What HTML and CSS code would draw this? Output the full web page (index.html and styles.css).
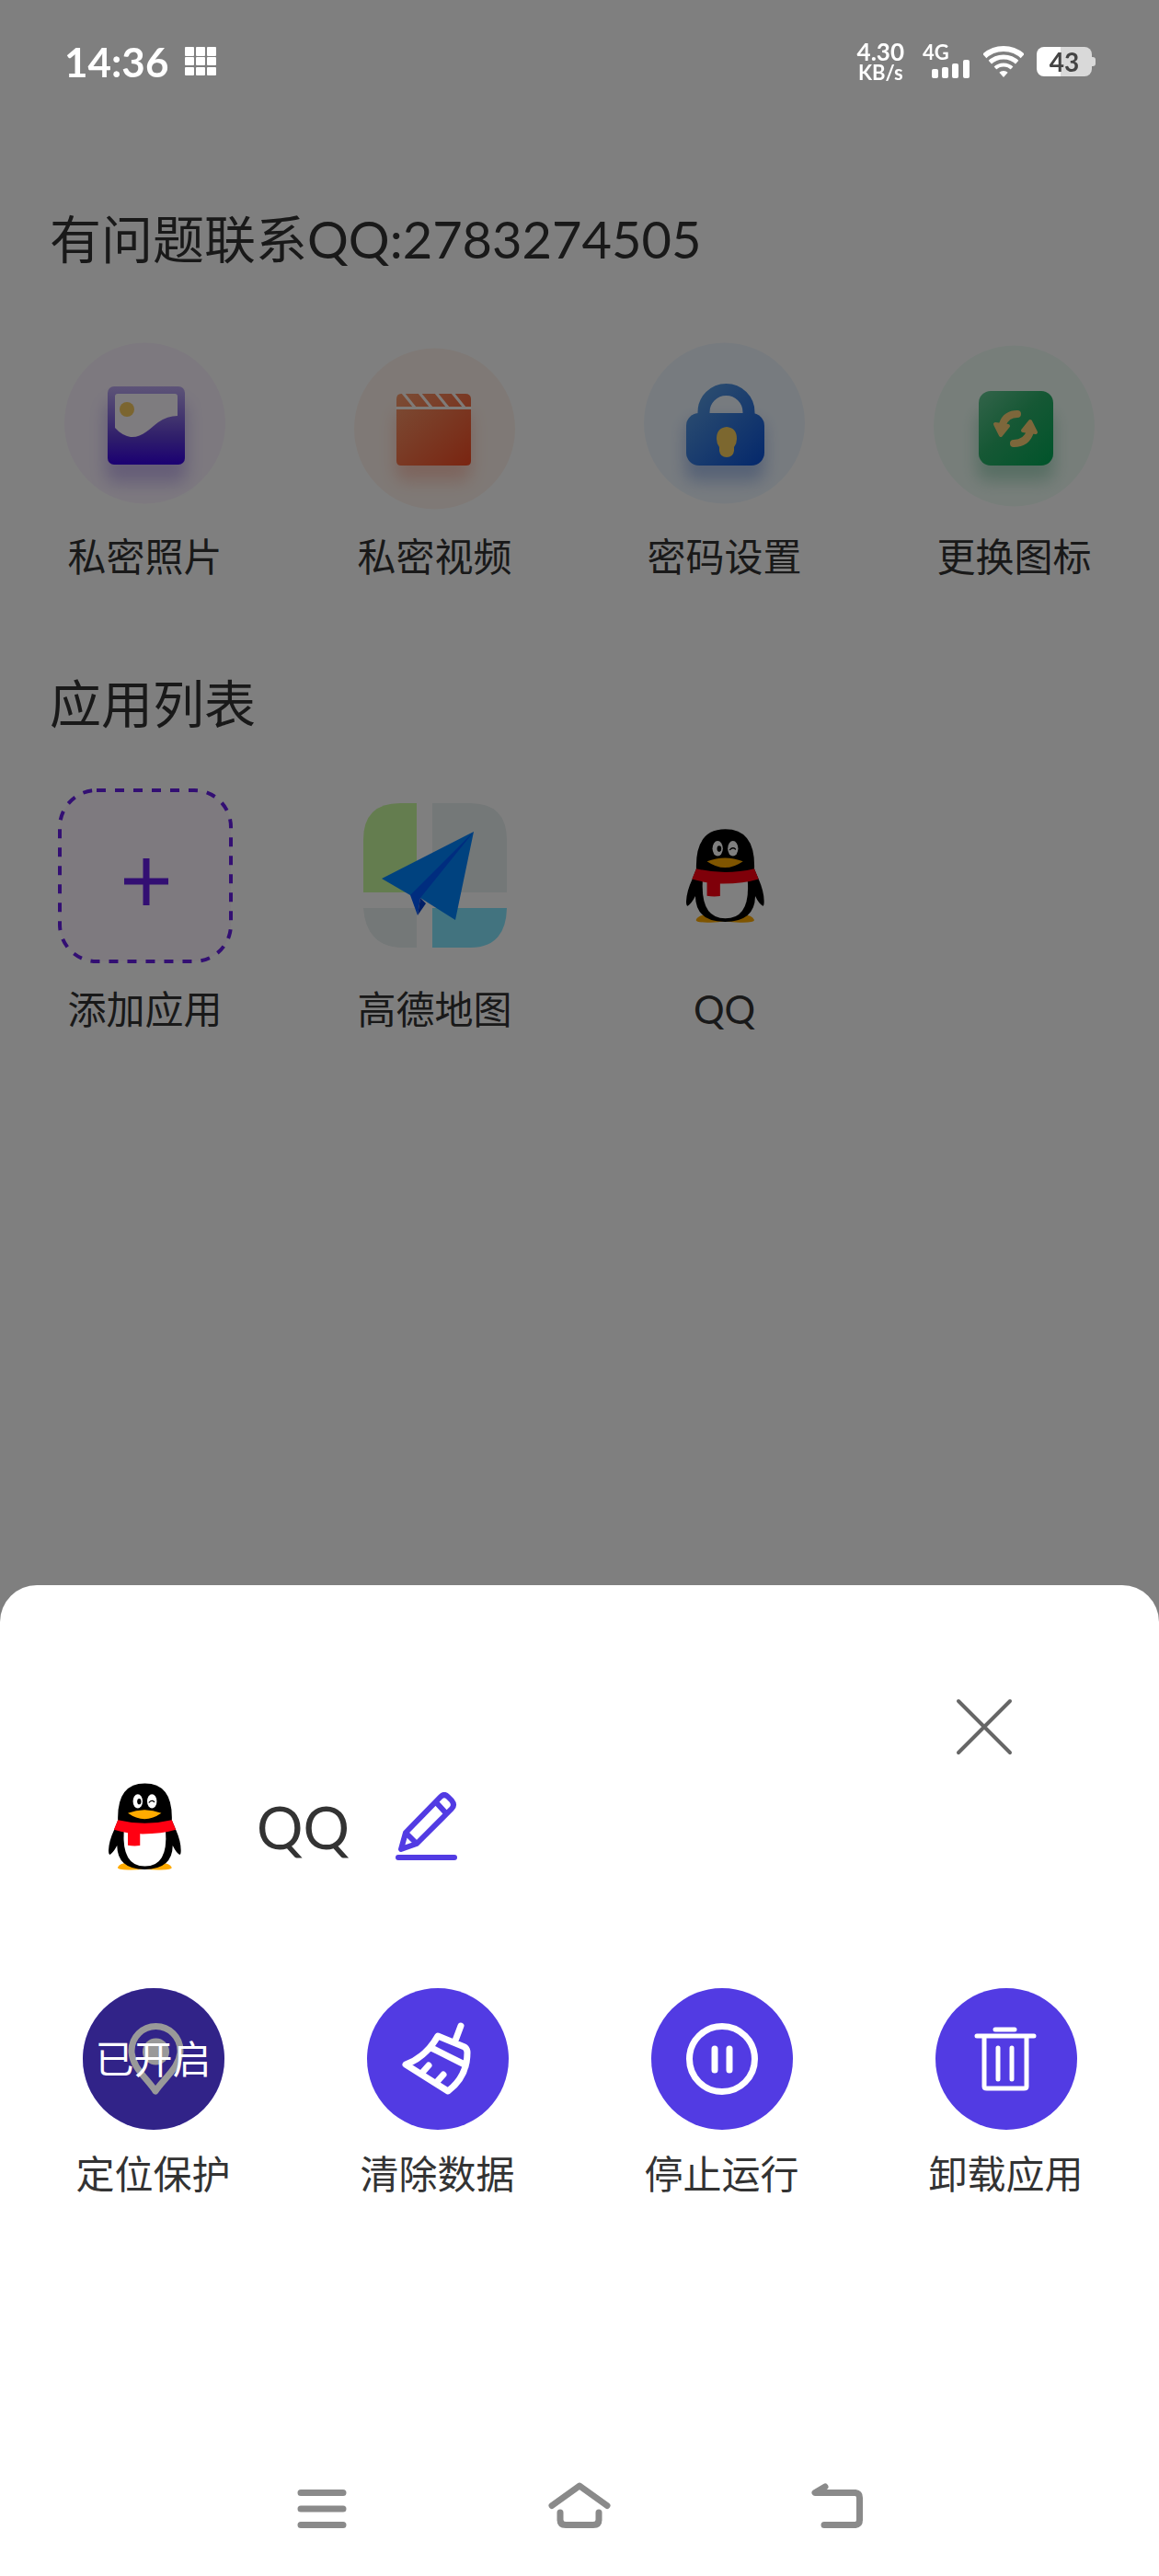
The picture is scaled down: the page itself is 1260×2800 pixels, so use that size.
FILE: index.html
```html
<!DOCTYPE html>
<html lang="zh-CN">
<head>
    <meta charset="UTF-8">
    <meta name="viewport" content="width=device-width, initial-scale=1.0">
    <title>应用列表</title>
    <link rel="stylesheet" href="styles.css">
</head>
<body>
    <!-- shared logo -->
    <svg class="defs" width="0" height="0" aria-hidden="true">
        <symbol id="penguin" viewBox="345 245 256 307">
            <path fill="#ffab00" d="M377 543 Q384 527 412 526 L532 526 Q560 527 568 543 Q568 551 530 551 Q500 552 472 547 Q446 552 414 551 Q377 551 377 543Z"/>
            <path fill="#000" d="M378 376 Q374 246 473 246 Q572 246 568 376 L582 409 Q600 450 600 482 Q600 497 596 497 Q584 492 571 465 Q570 549 472 549 Q376 549 375 465 Q362 490 350 497 Q345 497 345 482 Q346 450 365 409Z"/>
            <path fill="#fff" d="M399 412 L546 412 Q556 538 473 538 Q391 538 399 412Z"/>
            <path fill="#ff0012" d="M378 375 Q472 398 568 375 L582 409 Q530 425 456 424 L456 465 Q434 468 413 464 L413 420 Q388 416 364 409Z"/>
            <path fill="#ffab00" d="M413 351 Q472 328 531 351 Q472 392 413 351Z"/>
            <ellipse cx="448" cy="309" rx="17" ry="25" fill="#fff"/>
            <ellipse cx="498" cy="309" rx="17" ry="25" fill="#fff"/>
            <ellipse cx="453" cy="310" rx="7" ry="10" fill="#000"/>
            <path fill="none" stroke="#000" stroke-width="4" stroke-linecap="round" d="M488 313 Q497 303 506 311"/>
        </symbol>
    </svg>

    <header class="status-bar">
        <div class="status-left">
            <span class="time">14:36</span>
            <svg width="34" height="32" viewBox="0 0 34 32" fill="#fff">
                <rect x="0" y="0" width="10" height="10" rx="1"/><rect x="12" y="0" width="10" height="10" rx="1"/><rect x="24" y="0" width="10" height="10" rx="1"/>
                <rect x="0" y="11" width="10" height="9" rx="1"/><rect x="12" y="11" width="10" height="9" rx="1"/><rect x="24" y="11" width="10" height="9" rx="1"/>
                <rect x="0" y="22" width="10" height="9" rx="1"/><rect x="12" y="22" width="10" height="9" rx="1"/><rect x="24" y="22" width="10" height="9" rx="1"/>
            </svg>
        </div>
        <div class="status-right">
            <div class="speed"><span>4.30</span><small>KB/s</small></div>
            <div class="signal">
                <span>4G</span>
                <svg width="42" height="20" viewBox="0 0 42 20" fill="#fff">
                    <rect x="0" y="10" width="7" height="10" rx="2"/>
                    <rect x="11" y="8" width="7" height="12" rx="2"/>
                    <rect x="22" y="4" width="7" height="16" rx="2"/>
                    <rect x="34" y="0" width="7" height="20" rx="2"/>
                </svg>
            </div>
            <svg class="wifi" width="44" height="34" viewBox="0 0 44 34">
                <clipPath id="fan"><path d="M22 34 L-4 5 L-4 -5 H48 V5Z"/></clipPath>
                <g clip-path="url(#fan)" fill="none" stroke="#fff">
                    <circle cx="22" cy="34" r="31" stroke-width="6"/>
                    <circle cx="22" cy="34" r="22" stroke-width="5"/>
                    <circle cx="22" cy="34" r="13.5" stroke-width="4"/>
                    <circle cx="22" cy="34" r="3.5" stroke-width="7"/>
                </g>
            </svg>
            <div class="battery"><span>43</span></div>
        </div>
    </header>

    <main class="page">
        <h2>有问题联系QQ:2783274505</h2>
        <div class="grid features">
            <button type="button" class="item">
                <svg width="175" height="184" viewBox="0 0 175 184">
                    <defs>
                        <linearGradient id="gPhoto" x1="0" y1="0" x2="0" y2="1">
                            <stop offset="0" stop-color="#bba8f0"/>
                            <stop offset=".35" stop-color="#8c72e0"/>
                            <stop offset=".65" stop-color="#5f3dd6"/>
                            <stop offset="1" stop-color="#3600e6"/>
                        </linearGradient>
                        <filter id="soft" x="-40%" y="-40%" width="180%" height="180%"><feGaussianBlur stdDeviation="9"/></filter>
                    </defs>
                    <circle cx="87.500" cy="89" r="87.500" fill="#faf2ff"/>
                    <rect x="45" y="66" width="88" height="88" rx="12" fill="#6a4ad0" opacity=".32" filter="url(#soft)"/>
                    <rect x="47" y="49" width="84" height="85" rx="7" fill="url(#gPhoto)"/>
                    <path fill="#fdf9ff" d="M58 57 H120 Q123 57 123 60 V81 Q112 81 102 88 C93 95 84 105 72 104 Q62 102 55 94 V60 Q55 57 58 57Z"/>
                    <circle cx="68" cy="74" r="8" fill="#f7cb60"/>
                </svg>
                <span>私密照片</span>
            </button>
            <button type="button" class="item">
                <svg width="175" height="184" viewBox="0 0 175 184">
                    <defs>
                        <linearGradient id="gVideo" x1="0" y1="0" x2="1" y2="1">
                            <stop offset="0" stop-color="#f69a6c"/>
                            <stop offset="1" stop-color="#f44a22"/>
                        </linearGradient>
                    </defs>
                    <circle cx="87.500" cy="95" r="87.500" fill="#fff3ec"/>
                    <rect x="45" y="76" width="82" height="76" rx="12" fill="#f0603c" opacity=".28" filter="url(#soft)"/>
                    <path fill="url(#gVideo)" d="M51 57 H121 Q127 57 127 63 V130 Q127 135 122 135 H51 Q46 135 46 130 V63 Q46 57 51 57Z"/>
                    <path fill="none" stroke="#fff6f0" stroke-width="3" d="M45 72.500 H128 M53 56 L66 72 M71 56 L84 72 M89 56 L102 72 M107 56 L120 72"/>
                </svg>
                <span>私密视频</span>
            </button>
            <button type="button" class="item">
                <svg width="175" height="184" viewBox="0 0 175 184">
                    <defs>
                        <linearGradient id="gLock" gradientUnits="userSpaceOnUse" x1="50" y1="56" x2="128" y2="134">
                            <stop offset="0" stop-color="#5c9ee0"/>
                            <stop offset="1" stop-color="#0a52d8"/>
                        </linearGradient>
                    </defs>
                    <circle cx="87.500" cy="89" r="87.500" fill="#eff7ff"/>
                    <rect x="45" y="86" width="86" height="66" rx="12" fill="#2f62c8" opacity=".34" filter="url(#soft)"/>
                    <path fill="none" stroke="url(#gLock)" stroke-width="13" d="M65 86 V77 A24.500 24.500 0 0 1 114 77 V86"/>
                    <rect x="46" y="78" width="85" height="57" rx="14" fill="url(#gLock)"/>
                    <path fill="#f8cf5e" d="M90 93 Q101 94 101 106 Q101 111 98 115 V119 Q97 126 90 126 Q83 126 82 119 V115 Q79 111 79 106 Q79 94 90 93Z"/>
                </svg>
                <span>密码设置</span>
            </button>
            <button type="button" class="item">
                <svg width="175" height="184" viewBox="0 0 175 184">
                    <defs>
                        <linearGradient id="gSwap" x1="0" y1="0" x2="1" y2="1">
                            <stop offset="0" stop-color="#66c894"/>
                            <stop offset=".45" stop-color="#2cb06a"/>
                            <stop offset="1" stop-color="#00a855"/>
                        </linearGradient>
                    </defs>
                    <circle cx="87.500" cy="92" r="87.500" fill="#effdf5"/>
                    <rect x="47" y="76" width="84" height="76" rx="12" fill="#2a9a68" opacity=".32" filter="url(#soft)"/>
                    <rect x="49" y="54" width="81" height="81" rx="13" fill="url(#gSwap)"/>
                    <g fill="#fbcf77" stroke="#fbcf77" stroke-linejoin="round" stroke-linecap="round">
                        <path fill="none" stroke-width="8" d="M91 79 Q79 79 75 90 M87 111 Q101 111 105 98"/>
                        <path stroke-width="4" d="M67 90 L81 92 L73 102Z M97 97 L105 87 L111 99Z"/>
                    </g>
                </svg>
                <span>更换图标</span>
            </button>
        </div>

        <h2>应用列表</h2>
        <div class="grid apps">
            <button type="button" class="item">
                <svg width="190" height="190" viewBox="0 0 190 190">
                    <rect x="2" y="2" width="186" height="186" rx="40" fill="#fcf5ff" stroke="#661ee6" stroke-width="4" stroke-dasharray="10 10"/>
                    <path stroke="#661ee6" stroke-width="7" d="M72 101 H120 M96 76 V127"/>
                </svg>
                <span>添加应用</span>
            </button>
            <button type="button" class="item">
                <svg width="190" height="190" viewBox="-17 -16 190 190">
                    <path fill="#c8fa9f" d="M0 97 V40 Q0 0 40 0 H58 V97Z"/>
                    <path fill="#e8f0f0" d="M75 0 H116 Q156 0 156 40 V97 H75Z M0 114 H58 V157 H40 Q3 155 0 114Z"/>
                    <path fill="#84e6fe" d="M75 114 H156 Q155 157 116 157 H75Z"/>
                    <path fill="#0084ff" d="M120 31 L20 82 L51 100 L62 103 L100 127Z"/>
                    <path fill="#005aff" d="M120 31 L51 100 L59 122 L62 103Z"/>
                    <path fill="#003ccc" d="M62 103 L68 109 L59 122Z"/>
                </svg>
                <span>高德地图</span>
            </button>
            <button type="button" class="item">
                <svg width="190" height="190" viewBox="0 0 190 190"><use href="#penguin" x="53" y="44" width="85" height="102"/></svg>
                <span>QQ</span>
            </button>
        </div>
    </main>

    <div class="mask"></div>

    <section class="sheet">
        <button type="button" class="close" aria-label="关闭">
            <svg width="62" height="62" viewBox="0 0 62 62" stroke="#666" stroke-width="4" stroke-linecap="round"><path d="M3 3 L59 59 M59 3 L3 59"/></svg>
        </button>
        <div class="app-info">
            <svg width="79" height="95"><use href="#penguin" width="79" height="95"/></svg>
            <span class="app-name">QQ</span>
            <button type="button" aria-label="编辑">
                <svg width="68" height="76" viewBox="0 0 68 76" fill="none" stroke="#523be3" stroke-width="6" stroke-linecap="round" stroke-linejoin="round">
                    <path d="M3 71 H64"/>
                    <path d="M6 62 L11 44 L49 5 Q53 1 57 5 L61 9 Q65 14 61 18 L23 56Z M44 11 L55 23 M12 45 L22 55"/>
                </svg>
            </button>
        </div>
        <div class="grid actions">
            <button type="button" class="item">
                <span class="round">
                    <svg width="154" height="154" viewBox="0 0 154 154">
                        <path fill="none" stroke="#fff" stroke-width="7" stroke-linejoin="round" d="M79 112 C70 98 53 86 53 68 A26.500 26.500 0 0 1 106 68 C106 86 88 98 79 112Z"/>
                        <circle cx="79.500" cy="69" r="14.500" fill="#fff"/>
                    </svg>
                    <em class="on">已开启</em>
                </span>
                <span>定位保护</span>
            </button>
            <button type="button" class="item">
                <span class="round">
                    <svg width="154" height="154" viewBox="0 0 154 154" fill="none" stroke="#fff" stroke-width="7" stroke-linecap="round" stroke-linejoin="round">
                        <path d="M102 41 L96 57 M77 52 L106 64 Q109 66 109 70 Q109 96 88 112 L42 83 Q64 75 77 52Z M70 65 L106 83 M67 84 L59 93 M83 94 L75 103"/>
                    </svg>
                </span>
                <span>清除数据</span>
            </button>
            <button type="button" class="item">
                <span class="round">
                    <svg width="154" height="154" viewBox="0 0 154 154" fill="none" stroke="#fff" stroke-width="7" stroke-linecap="round">
                        <circle cx="77" cy="77" r="35.500"/>
                        <path d="M69 66 V89 M85 66 V89"/>
                    </svg>
                </span>
                <span>停止运行</span>
            </button>
            <button type="button" class="item">
                <span class="round">
                    <svg width="154" height="154" viewBox="0 0 154 154" fill="none" stroke="#fff" stroke-width="5" stroke-linecap="round">
                        <path d="M45 52 H107 M65 45 H86 M53 54 V107 Q53 109 56 109 H96 Q99 109 99 107 V54 M68 65 V99 M83 65 V99"/>
                    </svg>
                </span>
                <span>卸载应用</span>
            </button>
        </div>
        <nav class="nav-bar">
            <button type="button" aria-label="菜单">
                <svg width="68" height="50" viewBox="0 0 68 50" stroke="#8a8a8a" stroke-width="7" stroke-linecap="round"><path d="M11 11.500 H57 M11 29 H57 M11 46.500 H57"/></svg>
            </button>
            <button type="button" aria-label="主页">
                <svg width="68" height="50" viewBox="0 0 68 50" fill="none" stroke="#8a8a8a" stroke-width="7" stroke-linecap="round" stroke-linejoin="round"><path d="M4 25.500 L34 4 L64 25.500 M13 33 V41 Q13 46.500 19 46.500 H49 Q55 46.500 55 41 V33"/></svg>
            </button>
            <button type="button" aria-label="返回">
                <svg width="68" height="50" viewBox="0 0 68 50" fill="none" stroke="#8a8a8a" stroke-width="7" stroke-linecap="round" stroke-linejoin="round"><path d="M21 5 L10 11.500 H54 Q58.500 12 58.500 17 V41 Q58.500 46 54 46.500 H20"/></svg>
            </button>
        </nav>
    </section>
</body>
</html>
```

FILE: styles.css
```css
* {
    box-sizing: border-box;
}
body {
    margin: 0;
    min-height: 100vh;
    background: #fff;
    color: #333;
    font-family: Lato, "Noto Sans CJK SC", sans-serif;
}
svg {
    display: block;
}
.defs {
    position: absolute;
}
button {
    padding: 0;
    border: none;
    background: none;
    color: inherit;
    font: inherit;
    cursor: pointer;
}

/* status bar stays above the mask */
.status-bar {
    position: relative;
    z-index: 2;
    display: flex;
    justify-content: space-between;
    align-items: center;
    height: 134px;
    padding: 0 70px;
    color: #fff;
    font-weight: bold;
}
.status-left,
.status-right {
    display: flex;
    align-items: center;
}
.status-left {
    gap: 18px;
}
.time {
    font-size: 44px;
    line-height: 56px;
}
.speed {
    display: flex;
    flex-direction: column;
    align-items: center;
    margin-right: 20px;
    font-size: 26px;
    line-height: 24px;
}
.speed small {
    font-size: 22px;
    line-height: 22px;
}
.signal {
    display: flex;
    flex-direction: column;
    margin-right: 14px;
    font-size: 22px;
    line-height: 16px;
}
.signal svg {
    margin-left: 10px;
}
.wifi {
    margin-right: 14px;
}
.battery {
    position: relative;
    width: 60px;
    margin-right: 3px;
    border-radius: 8px;
    background: linear-gradient(to right, #fff 43%, #d9d9d9 43%);
    color: #444;
    font-size: 28px;
    line-height: 32px;
    text-align: center;
}
.battery::after {
    content: "";
    position: absolute;
    top: 11px;
    right: -4px;
    width: 4px;
    height: 10px;
    border-radius: 0 3px 3px 0;
    background: #d9d9d9;
}

.page h2 {
    margin: 90px 54px 0;
    font-size: 56px;
    font-weight: normal;
    line-height: 72px;
}
.grid {
    display: grid;
    grid-template-columns: repeat(4, 1fr);
}
.item {
    display: flex;
    flex-direction: column;
    align-items: center;
    font-size: 42px;
    line-height: 60px;
}
.features {
    margin: 75px 0 94px;
}
.features .item,
.apps .item {
    gap: 20px;
}
.apps {
    margin-top: 56px;
}

.mask {
    position: fixed;
    inset: 0;
    z-index: 1;
    background: rgba(0, 0, 0, 0.5);
}

/* bottom sheet */
.sheet {
    position: fixed;
    left: 0;
    right: 0;
    bottom: 0;
    z-index: 3;
    display: flex;
    flex-direction: column;
    padding: 123px 12px 52px;
    border-radius: 40px 40px 0 0;
    background: #fff;
}
.close {
    align-self: flex-end;
    margin-right: 147px;
}
.app-info {
    display: flex;
    align-items: center;
    margin: 30px 106px 128px;
}
.app-name {
    margin: 0 50px 0 82px;
    font-size: 63px;
    line-height: 76px;
}
.actions .item {
    gap: 18px;
}
.round {
    position: relative;
    border-radius: 50%;
    overflow: hidden;
    background: #523be3;
}
.on {
    position: absolute;
    inset: 0;
    background: rgba(0, 0, 0, 0.4);
    color: #fff;
    font-style: normal;
    line-height: 154px;
    text-align: center;
}
.nav-bar {
    display: flex;
    justify-content: center;
    gap: 212px;
    margin-top: 305px;
}
```
